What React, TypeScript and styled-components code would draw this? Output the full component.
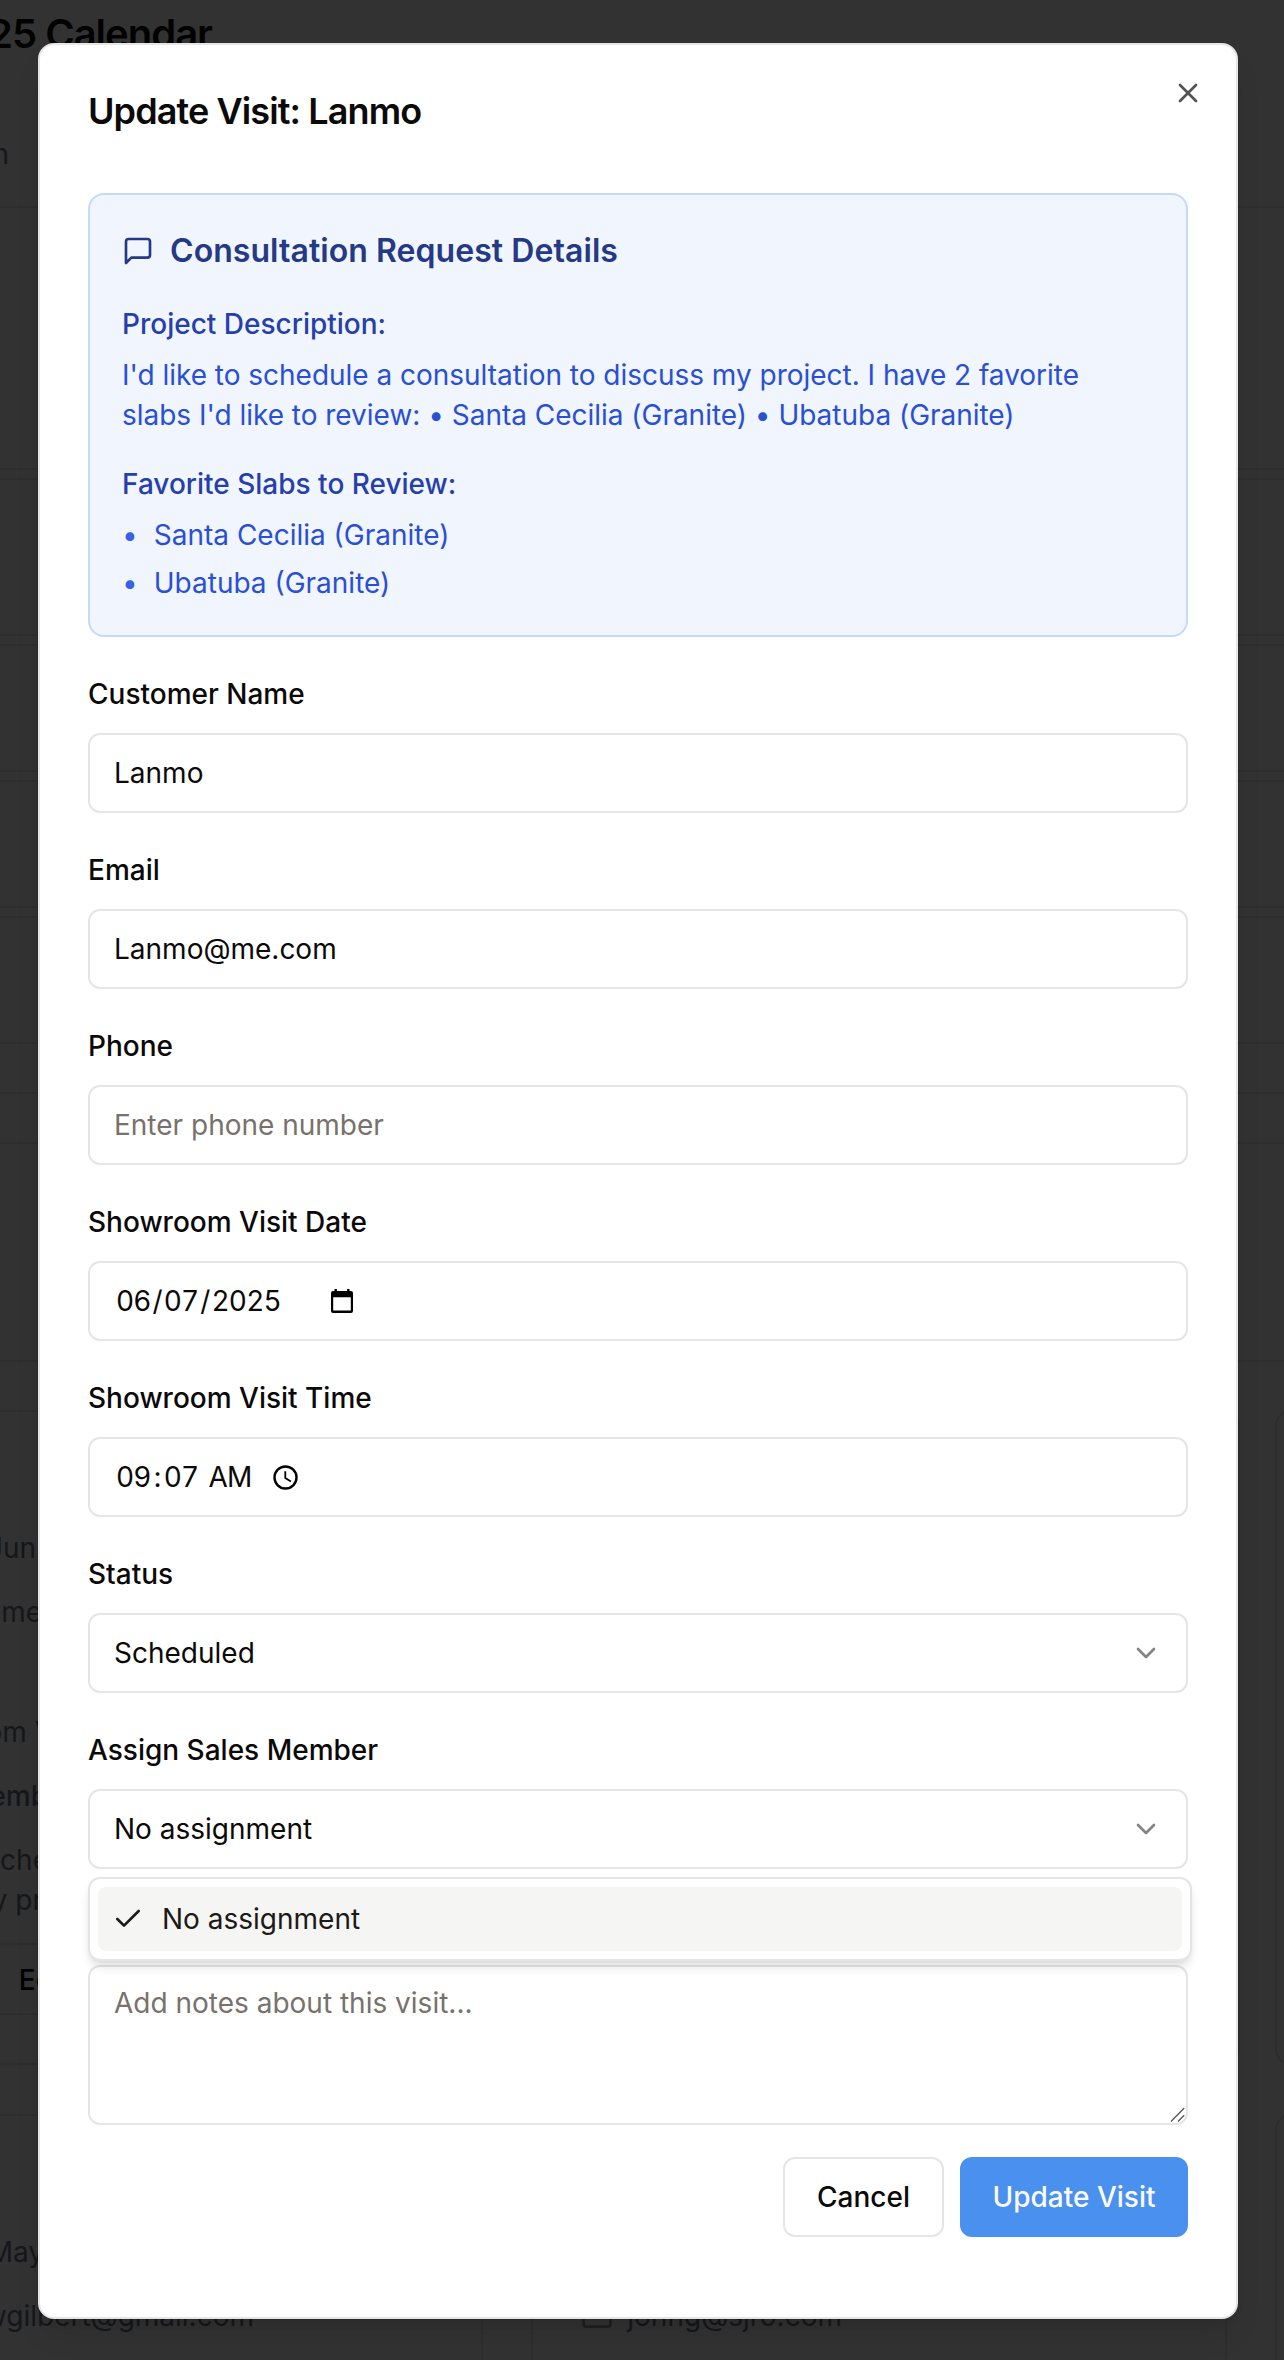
import React from "react";
import styled, { createGlobalStyle } from "styled-components";
import { X, ChevronDown, Check, Mail } from "lucide-react";

const Global = createGlobalStyle`
  * { box-sizing: border-box; }
  html, body { margin: 0; padding: 0; }
  body { background: #323232; font-family: Inter, sans-serif; color: #0c0a09; }
  input, textarea, button { font: inherit; letter-spacing: inherit; color: inherit; }
`;

const Screen = styled.div`
  position: relative;
  width: 1284px;
  height: 2360px;
  overflow: hidden;
  background: #323232;
  padding: 43px 46px 41px 38px;
  font-size: 28px;
  line-height: 40px;
`;

const Backdrop = styled.div`
  position: absolute;
  inset: 0;
  overflow: hidden;
`;

const Rule = styled.div<{ $y: number }>`
  position: absolute;
  left: 0;
  right: 0;
  top: ${(p) => p.$y}px;
  height: 2px;
  background: #2d2d2d;
`;

const Panel = styled.div<{ $x: number; $y: number; $w: number; $h: number }>`
  position: absolute;
  left: ${(p) => p.$x}px;
  top: ${(p) => p.$y}px;
  width: ${(p) => p.$w}px;
  height: ${(p) => p.$h}px;
  border: 2px solid #2d2d2d;
  border-radius: 16px;
`;

const Ghost = styled.span<{ $right: number; $y: number; $weight?: number; $color?: string }>`
  position: absolute;
  right: ${(p) => 1284 - p.$right}px;
  top: ${(p) => p.$y}px;
  white-space: nowrap;
  font-weight: ${(p) => p.$weight ?? 400};
  color: ${(p) => p.$color ?? "#15171b"};
`;

const GhostHeading = styled(Ghost)`
  font-size: 40px;
  letter-spacing: -1px;
`;

const GhostIcon = styled.span`
  position: absolute;
  left: 581px;
  top: 2300px;
  color: #1f2022;
  svg { display: block; }
`;

const Dialog = styled.section`
  position: relative;
  width: 1200px;
  height: 2276px;
  padding: 48px;
  background: #fff;
  border: 2px solid #e5e5e5;
  border-radius: 16px;
  box-shadow: 0 20px 30px -6px rgba(0, 0, 0, 0.1), 0 8px 12px -8px rgba(0, 0, 0, 0.1);
`;

const Title = styled.h2`
  margin: 0 0 64px;
  font-size: 36px;
  line-height: 36px;
  font-weight: 600;
  letter-spacing: -0.9px;
`;

const CloseButton = styled.button`
  position: absolute;
  top: 32px;
  right: 32px;
  width: 32px;
  height: 32px;
  padding: 0;
  border: 0;
  background: none;
  color: #545352;
  svg { display: block; }
`;

const InfoCard = styled.div`
  height: 444px;
  padding: 32px;
  background: #f0f5fe;
  border: 2px solid #c3dafb;
  border-radius: 16px;
  color: #2a4fd5;
`;

const InfoTitle = styled.h3`
  display: flex;
  align-items: center;
  gap: 16px;
  margin: 0 0 29px;
  font-size: 32px;
  line-height: 48px;
  font-weight: 600;
  letter-spacing: 0.06px;
  color: #253985;
`;

const InfoLabel = styled.div`
  margin-bottom: 11px;
  font-weight: 500;
  color: #263fab;
`;

const InfoText = styled.p`
  margin: 0 0 29px;
  letter-spacing: -0.02px;
`;

const SlabList = styled.ul`
  display: flex;
  flex-direction: column;
  gap: 8px;
  margin: 0;
  padding: 0;
  list-style: none;
`;

const Slab = styled.li`
  display: flex;
  gap: 16px;
`;

const Bullet = styled.span`
  color: #3662e3;
`;

const Form = styled.div`
  display: flex;
  flex-direction: column;
  gap: 32px;
  margin-top: 32px;
`;

const Field = styled.div`
  position: relative;
  display: flex;
  flex-direction: column;
`;

const Label = styled.label`
  height: 64px;
  padding-top: 5px;
  font-weight: 500;
`;

const Control = styled.div`
  display: flex;
  align-items: center;
  height: 80px;
  padding: 0 24px;
  border: 2px solid #e5e5e5;
  border-radius: 12px;
  background: #fff;
`;

const TextInput = styled.input`
  height: 80px;
  padding: 0 24px;
  border: 2px solid #e5e5e5;
  border-radius: 12px;
  background: #fff;
  outline: none;
  &::placeholder { color: #78716c; opacity: 1; }
`;

const SelectControl = styled(Control)`
  justify-content: space-between;
  svg { color: #858483; }
`;

const DateText = styled.span<{ $width: number }>`
  display: flex;
  width: ${(p) => p.$width}px;
  padding-left: 2px;
  font-variant-numeric: tabular-nums;
  letter-spacing: -0.8px;
`;

const Separator = styled.span`
  width: 13px;
  text-align: center;
`;

const Meridiem = styled.span`
  margin-left: 10px;
`;

const Menu = styled.div`
  position: absolute;
  left: 0;
  top: 152px;
  z-index: 2;
  width: 1104px;
  height: 84px;
  padding: 8px;
  border: 2px solid #e5e5e5;
  border-radius: 12px;
  background: #fff;
  box-shadow: 0 8px 12px -2px rgba(0, 0, 0, 0.1), 0 4px 8px -4px rgba(0, 0, 0, 0.1);
`;

const MenuItem = styled.div`
  display: flex;
  align-items: center;
  gap: 18px;
  height: 64px;
  padding: 0 14px;
  border-radius: 8px;
  background: #f5f5f4;
  color: #1c1917;
`;

const NotesBox = styled.div`
  position: relative;
  display: flex;
  height: 160px;
  margin-top: 64px;
  padding: 16px 24px;
  border: 2px solid #e5e5e5;
  border-radius: 12px;
  color: #78716c;
`;

const Grip = styled.svg`
  position: absolute;
  right: 1px;
  bottom: 0;
`;

const Actions = styled.div`
  display: flex;
  justify-content: flex-end;
  gap: 16px;
`;

const ActionButton = styled.button<{ $primary?: boolean }>`
  width: ${(p) => (p.$primary ? 228 : 161)}px;
  height: 80px;
  padding: 0;
  font-weight: 500;
  border: 2px solid ${(p) => (p.$primary ? "#4a90ee" : "#e5e5e5")};
  border-radius: 12px;
  background: ${(p) => (p.$primary ? "#4a90ee" : "#fff")};
  color: ${(p) => (p.$primary ? "#fafaf9" : "#0c0a09")};
`;

const rules = [206, 468, 478, 634, 644, 770, 780, 906, 916, 1042, 1092, 1142, 1360];

function MessageIcon() {
  return (
    <svg width="32" height="32" viewBox="0 0 24 24" fill="none" stroke="currentColor" strokeWidth="2" strokeLinecap="round" strokeLinejoin="round">
      <path d="M21 15a2 2 0 0 1-2 2H7l-4 4V5a2 2 0 0 1 2-2h14a2 2 0 0 1 2 2z" />
    </svg>
  );
}

export default function App() {
  return (
    <Screen>
      <Global />
      <Backdrop aria-hidden>
        {rules.map((y) => <Rule key={y} $y={y} />)}
        <Panel $x={-500} $y={1410} $w={1740} $h={655} />
        <Panel $x={1275} $y={1410} $w={500} $h={655} />
        <Panel $x={-500} $y={2114} $w={983} $h={500} />
        <Panel $x={531} $y={2114} $w={696} $h={500} />
        <Panel $x={1275} $y={2114} $w={500} $h={500} />
        <Panel $x={-300} $y={1943} $w={400} $h={72} />
        <GhostHeading $right={212} $y={14} $weight={600} $color="#020202">25 Calendar</GhostHeading>
        <Ghost $right={9} $y={134}>n</Ghost>
        <Ghost $right={36} $y={1528}>Jun</Ghost>
        <Ghost $right={42} $y={1592}>me</Ghost>
        <Ghost $right={54} $y={1712}>om V</Ghost>
        <Ghost $right={48} $y={1776} $weight={500}>emb</Ghost>
        <Ghost $right={49} $y={1840}>che</Ghost>
        <Ghost $right={43} $y={1880}>y pr</Ghost>
        <Ghost $right={53} $y={1960} $weight={500} $color="#020202">Ed</Ghost>
        <Ghost $right={44} $y={2232}>May</Ghost>
        <Ghost $right={254} $y={2296}>wgilbert@gmail.com</Ghost>
        <Ghost $right={842} $y={2296}>johng@sjro.com</Ghost>
        <GhostIcon><Mail size={32} /></GhostIcon>
      </Backdrop>
      <Dialog role="dialog">
        <CloseButton aria-label="Close"><X size={32} strokeWidth={2} /></CloseButton>
        <Title>Update Visit: Lanmo</Title>
        <InfoCard>
          <InfoTitle><MessageIcon /><span>Consultation Request Details</span></InfoTitle>
          <InfoLabel>Project Description:</InfoLabel>
          <InfoText>
            I'd like to schedule a consultation to discuss my project. I have 2 favorite slabs I'd like to review: • Santa Cecilia (Granite) • Ubatuba (Granite)
          </InfoText>
          <InfoLabel>Favorite Slabs to Review:</InfoLabel>
          <SlabList>
            {["Santa Cecilia (Granite)", "Ubatuba (Granite)"].map((s) => (
              <Slab key={s}><Bullet>•</Bullet><span>{s}</span></Slab>
            ))}
          </SlabList>
        </InfoCard>
        <Form>
          <Field><Label>Customer Name</Label><TextInput defaultValue="Lanmo" /></Field>
          <Field><Label>Email</Label><TextInput defaultValue="Lanmo@me.com" /></Field>
          <Field><Label>Phone</Label><TextInput placeholder="Enter phone number" /></Field>
          <Field>
            <Label>Showroom Visit Date</Label>
            <Control>
              <DateText $width={217}>06<Separator>/</Separator>07<Separator>/</Separator>2025</DateText>
              <svg width="22" height="24" viewBox="0 0 22 24">
                <path d="M3.5 0h2.4v2h10.2V0h2.4v2H20a2 2 0 0 1 2 2v18a2 2 0 0 1-2 2H2a2 2 0 0 1-2-2V4a2 2 0 0 1 2-2h1.5zM2.2 8.2v13.4h17.6V8.2z" fillRule="evenodd" />
              </svg>
            </Control>
          </Field>
          <Field>
            <Label>Showroom Visit Time</Label>
            <Control>
              <DateText $width={159}>09<Separator>:</Separator>07<Meridiem>AM</Meridiem></DateText>
              <svg width="25" height="25" viewBox="0 0 25 25" fill="none" stroke="#000" strokeWidth="2.4">
                <circle cx="12.5" cy="12.5" r="11" />
                <path d="M12.3 6.2v6.8l5.6 3.4" strokeWidth="1.8" />
              </svg>
            </Control>
          </Field>
          <Field><Label>Status</Label><SelectControl><span>Scheduled</span><ChevronDown size={32} /></SelectControl></Field>
          <Field>
            <Label>Assign Sales Member</Label>
            <SelectControl><span>No assignment</span><ChevronDown size={32} /></SelectControl>
            <Menu><MenuItem><Check size={32} /><span>No assignment</span></MenuItem></Menu>
          </Field>
          <NotesBox>
            Add notes about this visit...
            <Grip width="16" height="16" viewBox="0 0 16 16" stroke="#555" strokeWidth="1.3">
              <path d="M2 14.5L15.2 1M9 14.5l6.2-6.2" />
            </Grip>
          </NotesBox>
          <Actions>
            <ActionButton>Cancel</ActionButton>
            <ActionButton $primary>Update Visit</ActionButton>
          </Actions>
        </Form>
      </Dialog>
    </Screen>
  );
}
